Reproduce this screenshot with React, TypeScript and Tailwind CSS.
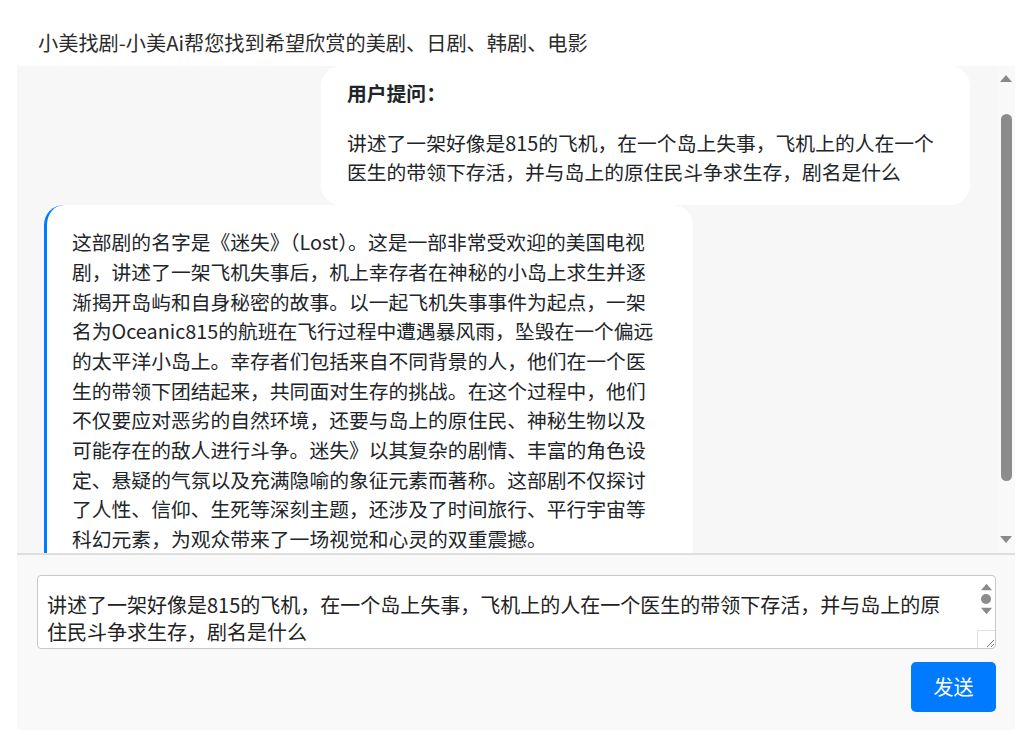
import React from "react";

const aiLines = [
  "这部剧的名字是《迷失》（Lost）。这是一部非常受欢迎的美国电视",
  "剧，讲述了一架飞机失事后，机上幸存者在神秘的小岛上求生并逐",
  "渐揭开岛屿和自身秘密的故事。以一起飞机失事事件为起点，一架",
  "名为Oceanic815的航班在飞行过程中遭遇暴风雨，坠毁在一个偏远",
  "的太平洋小岛上。幸存者们包括来自不同背景的人，他们在一个医",
  "生的带领下团结起来，共同面对生存的挑战。在这个过程中，他们",
  "不仅要应对恶劣的自然环境，还要与岛上的原住民、神秘生物以及",
  "可能存在的敌人进行斗争。迷失》以其复杂的剧情、丰富的角色设",
  "定、悬疑的气氛以及充满隐喻的象征元素而著称。这部剧不仅探讨",
  "了人性、信仰、生死等深刻主题，还涉及了时间旅行、平行宇宙等",
  "科幻元素，为观众带来了一场视觉和心灵的双重震撼。",
];

const font = {
  fontFamily: '"Microsoft YaHei", "Noto Sans CJK SC", "Noto Sans", sans-serif',
};

function Tri({ dir, size = 10, color = "#8a8a8a" }: { dir: "up" | "down"; size?: number; color?: string }) {
  return (
    <svg width={size + 2} height={size} viewBox="0 0 12 8">
      {dir === "up" ? (
        <polygon points="0,8 12,8 6,1" fill={color} />
      ) : (
        <polygon points="0,0 12,0 6,7" fill={color} />
      )}
    </svg>
  );
}

export default function App() {
  return (
    <div
      className="w-[1031px] h-[747px] bg-white text-[#212529] overflow-hidden"
      style={font}
    >
      <div className="ml-[17px] w-[998px]">
        <div className="h-[66px] pt-[28px] pl-[21px] text-[20.2px] leading-[29px] text-[#2b2b2b]">
          小美找剧-小美Ai帮您找到希望欣赏的美剧、日剧、韩剧、电影
        </div>

        <div className="flex h-[487px] bg-[#f7f7f7]">
          <div className="flex-1 overflow-hidden px-[27px] flex flex-col">
            <div className="self-end w-[649px] bg-white rounded-[20px] pl-[26px] pr-[20px] pt-[12px] pb-[18px] text-[19.8px] leading-[29.7px]">
              <div className="font-bold">用户提问：</div>
              <div className="mt-[20px] whitespace-nowrap">
                <div>讲述了一架好像是815的飞机，在一个岛上失事，飞机上的人在一个</div>
                <div>医生的带领下存活，并与岛上的原住民斗争求生存，剧名是什么</div>
              </div>
            </div>
            <div className="self-start w-[649px] bg-white rounded-[20px] border-l-[3px] border-[#007bff] pl-[25px] pr-[20px] pt-[22px] pb-[22px] text-[19.8px] leading-[29.7px] whitespace-nowrap">
              {aiLines.map((l, i) => (
                <div key={i}>{l}</div>
              ))}
            </div>
          </div>
          <div className="w-[18px] bg-[#f9f9f9] flex flex-col items-center">
            <div className="h-[22px] flex items-center justify-center mt-[1px]">
              <Tri dir="up" />
            </div>
            <div className="mt-[25px] w-[11px] h-[367px] rounded-full bg-[#8c8c8c]" />
            <div className="flex-1" />
            <div className="h-[20px] flex items-center justify-center mb-[3px]">
              <Tri dir="down" />
            </div>
          </div>
        </div>

        <div className="h-[2px] bg-[#dedede]" />

        <div className="h-[175px] bg-[#f9f9f9] pl-[20px] pr-[19px] pt-[20px] flex flex-col">
          <div className="h-[74px] bg-white border border-[#c8c8c8] rounded-[4px] flex">
            <div className="flex-1 pl-[9px] pt-[15px] text-[20px] leading-[27px] text-[#222] whitespace-nowrap overflow-hidden">
              <div>讲述了一架好像是815的飞机，在一个岛上失事，飞机上的人在一个医生的带领下存活，并与岛上的原</div>
              <div>住民斗争求生存，剧名是什么</div>
            </div>
            <div className="w-[18px] flex flex-col items-center">
              <div className="mt-[6px]">
                <Tri dir="up" size={9} />
              </div>
              <div className="mt-[3px] w-[10px] h-[10px] rounded-full bg-[#8c8c8c]" />
              <div className="mt-[3px]">
                <Tri dir="down" size={9} />
              </div>
              <div className="flex-1" />
              <div className="w-[18px] h-[18px] border-l border-t border-[#e0e0e0] flex items-end justify-end">
                <svg width="10" height="10" viewBox="0 0 10 10">
                  <line x1="9" y1="2" x2="2" y2="9" stroke="#777" strokeWidth="1" />
                  <line x1="9" y1="6" x2="6" y2="9" stroke="#777" strokeWidth="1" />
                </svg>
              </div>
            </div>
          </div>
          <div className="mt-[13px] flex justify-end">
            <button className="w-[85px] h-[50px] rounded-[5px] bg-[#007bff] text-white text-[20px]">
              发送
            </button>
          </div>
        </div>
      </div>
    </div>
  );
}
